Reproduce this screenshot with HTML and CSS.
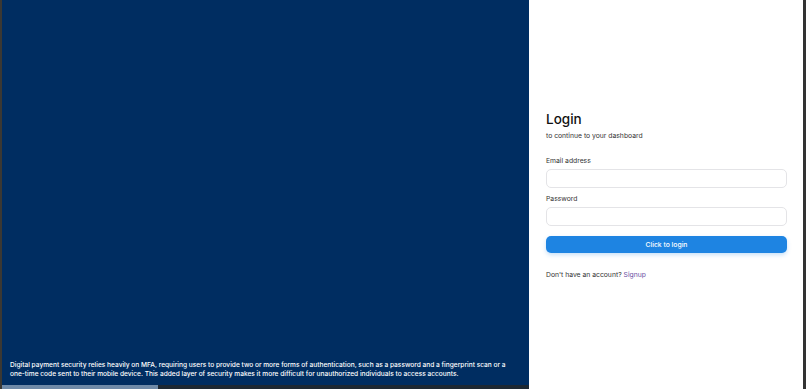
FILE: index.html
```html
<!DOCTYPE html>
<html lang="en">
<head>
    <meta charset="UTF-8">
    <meta name="viewport" content="width=device-width, initial-scale=1.0">
    <title>Login</title>
    <link rel="stylesheet" href="styles.css">
</head>
<body>
    <div class="frame">
        <div class="hero">
            <p class="hero-text">Digital payment security relies heavily on MFA, requiring users to provide two or more forms of authentication, such as a password and a fingerprint scan or a one-time code sent to their mobile device. This added layer of security makes it more difficult for unauthorized individuals to access accounts.</p>
            <div class="progress">
                <div class="progress-bar"></div>
            </div>
        </div>

        <div class="side">
            <form class="login-form">
                <h1 class="title">Login</h1>
                <p class="subtitle">to continue to your dashboard</p>

                <label for="email">Email address</label>
                <input type="email" id="email">

                <label for="password">Password</label>
                <input type="password" id="password">

                <button type="submit" class="login-button">Click to login</button>

                <p class="signup">Don't have an account? <a href="#">Signup</a></p>
            </form>
        </div>
    </div>
</body>
</html>
```

FILE: styles.css
```css
html, body {
    margin: 0;
    height: 100%;
}

body {
    font-family: Inter, "Noto Sans", sans-serif;
    background: #333;
}

.frame {
    display: flex;
    height: 100%;
    border-left: 2px solid #3b3833;
    border-right: 3px solid #333;
    box-sizing: border-box;
}

.hero {
    width: 527px;
    flex-shrink: 0;
    background: #002d61;
    display: flex;
    flex-direction: column;
    justify-content: flex-end;
}

.hero-text {
    margin: 0;
    padding: 0 8px 6px;
    color: #fff;
    font-size: 6.6px;
    line-height: 9px;
    font-weight: 500;
}

.progress {
    height: 4px;
    background: #1d2833;
}

.progress-bar {
    width: 156px;
    height: 100%;
    background: #6f8aa8;
}

.side {
    flex: 1;
    background: #fff;
    display: flex;
    align-items: center;
    padding: 0 16px 0 17px;
}

.login-form {
    width: 100%;
    display: flex;
    flex-direction: column;
}

.title {
    margin: 0;
    font-size: 13.5px;
    line-height: 17px;
    font-weight: 500;
    color: #111;
}

.subtitle {
    margin: 3px 0 16px;
    font-size: 6.8px;
    line-height: 9px;
    color: #333;
}

label {
    font-size: 6.8px;
    line-height: 9px;
    color: #333;
    margin-bottom: 4px;
}

input {
    height: 19px;
    border: 1px solid #e4e4e7;
    border-radius: 5px;
    box-sizing: border-box;
    margin: 0 0 6px;
    padding: 0 6px;
    font-size: 8px;
}

.login-button {
    margin-top: 4px;
    height: 17px;
    border: none;
    border-radius: 5px;
    background: #1e84e2;
    color: #fff;
    font-family: inherit;
    font-size: 6.8px;
    font-weight: 500;
    box-shadow: 0 2px 4px rgba(30, 132, 226, 0.25);
    cursor: pointer;
}

.signup {
    margin: 17px 0 0;
    font-size: 6.8px;
    line-height: 9px;
    color: #333;
}

.signup a {
    color: #6a4fa3;
    text-decoration: none;
}
```
